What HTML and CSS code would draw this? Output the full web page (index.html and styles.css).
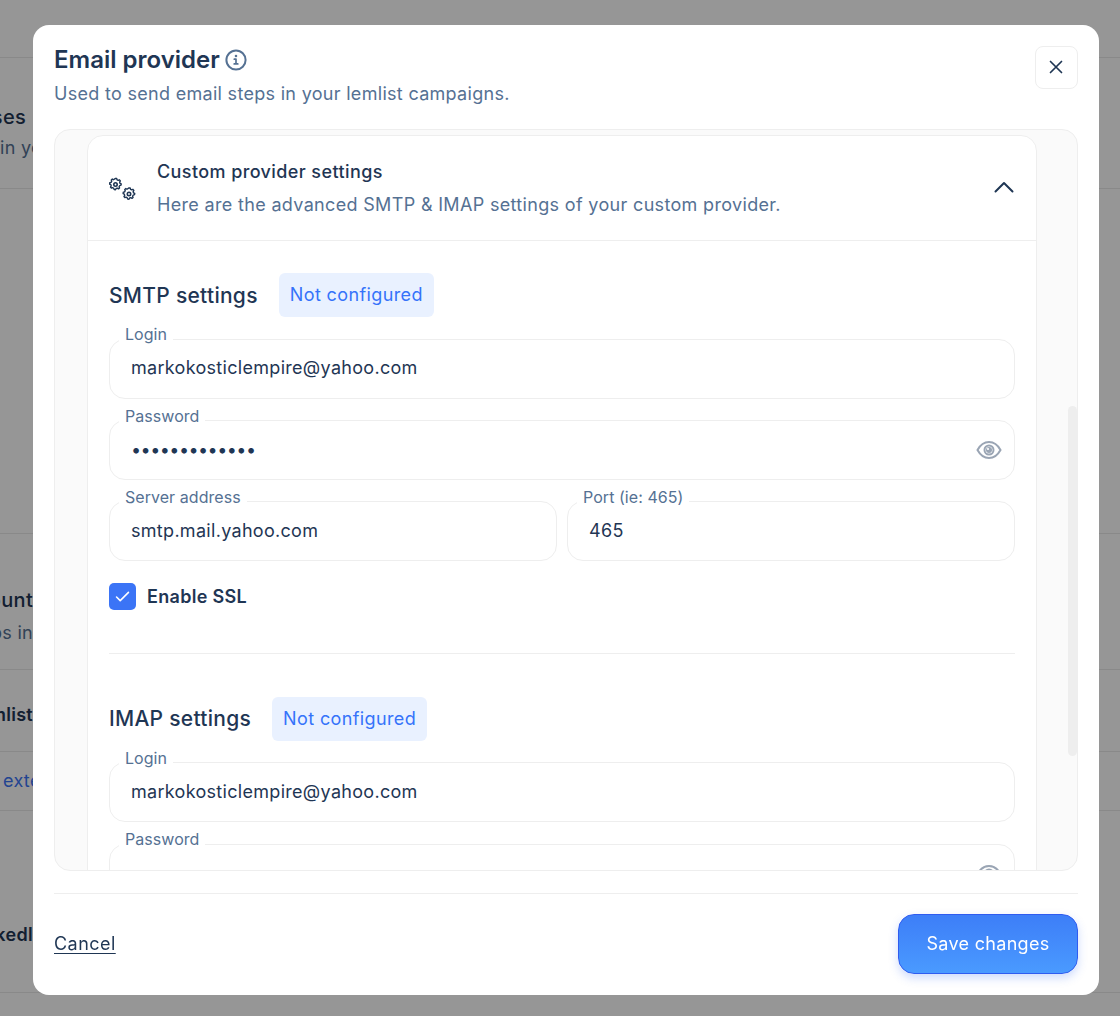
FILE: index.html
```html
<!DOCTYPE html>
<html lang="en">
<head>
<meta charset="utf-8">
<title>Email provider</title>
<link rel="stylesheet" href="styles.css">
</head>
<body>
<div class="page">
  <div class="bg-row bg-top"></div>
  <div class="bg-row bg-a"><div class="bg-title end-26">Email addresses</div><div class="bg-sub">in your</div></div>
  <div class="bg-row bg-b"></div>
  <div class="bg-row bg-c"><div class="bg-title end-33">Email account</div><div class="bg-sub bg-sub-low end-33">Steps in</div></div>
  <div class="bg-row bg-d"><div class="bg-strong end-33">lemlist</div></div>
  <div class="bg-row bg-e"><div class="bg-link">exte</div></div>
  <div class="bg-row bg-f"><div class="bg-strong end-33">Linkedl</div></div>
</div>
<div class="overlay">
  <div class="modal">
    <header class="modal-head">
      <div>
        <h1 class="modal-title">Email provider
          <svg class="info" viewBox="0 0 22 22" width="22" height="22" fill="none" stroke="#557193" stroke-width="2" stroke-linecap="round" stroke-linejoin="round"><circle cx="11" cy="11" r="9.600"/><path d="M9.300 10.200H11v4.600M9.200 14.900h3.600" stroke-width="1.700"/><circle cx="11" cy="7" r=".6" stroke-width="1.400"/></svg>
        </h1>
        <p class="modal-sub">Used to send email steps in your lemlist campaigns.</p>
      </div>
      <button class="close" type="button" aria-label="Close">
        <svg viewBox="0 0 14 14" width="14" height="14" fill="none" stroke="#1f3654" stroke-width="1.700" stroke-linecap="round"><path d="M1.500 1.500l11 11M12.500 1.500l-11 11"/></svg>
      </button>
    </header>
    <div class="panel">
      <div class="scrollbar"></div>
      <section class="card">
        <div class="card-head">
          <svg class="gears" viewBox="0 0 28 24" width="28" height="24" fill="none" stroke="#1f3654" stroke-width="1.600" stroke-linejoin="round">
            <path d="M7 1.500l1.300.2.500 1.500 1.300.6 1.400-.6 1 1.200-.8 1.300.4 1.400 1.400.7-.2 1.500-1.500.5-.7 1.300.5 1.400-1.200 1-1.300-.8-1.400.4-.7 1.400-1.500-.2-.5-1.500-1.300-.7-1.400.5-1-1.200.8-1.300-.4-1.400-1.400-.7.2-1.500 1.500-.5.700-1.300-.5-1.400 1.200-1 1.300.8z" transform="translate(.34 1.020) scale(.88)"/>
            <circle cx="6.500" cy="8.500" r="1.700"/>
            <path d="M19 9.500l1.300.2.500 1.500 1.300.6 1.400-.6 1 1.200-.8 1.300.4 1.400 1.400.7-.2 1.500-1.500.5-.7 1.300.5 1.400-1.200 1-1.300-.8-1.400.4-.7 1.400-1.500-.2-.5-1.500-1.300-.7-1.400.5-1-1.200.8-1.300-.4-1.400-1.400-.7.2-1.500 1.500-.5.700-1.300-.5-1.400 1.200-1 1.300.8z" transform="translate(3.280 3.480) scale(.88)"/>
            <circle cx="20" cy="18" r="1.700"/>
          </svg>
          <div class="card-text">
            <div class="card-title">Custom provider settings</div>
            <div class="card-desc">Here are the advanced SMTP &amp; IMAP settings of your custom provider.</div>
          </div>
          <svg class="chev" viewBox="0 0 20 12" width="20" height="12" fill="none" stroke="#1f3654" stroke-width="2" stroke-linecap="round" stroke-linejoin="round"><path d="M1.500 10.500L10 2l8.500 8.500"/></svg>
        </div>
        <div class="card-body">
          <div class="sec-head"><h2 class="sec-title sec-title-low">SMTP settings</h2><span class="badge">Not configured</span></div>
          <div class="field"><span class="label label-hi">Login</span><span class="value value-hi">markokosticlempire@yahoo.com</span></div>
          <div class="field"><span class="label">Password</span><span class="value dots">•••••••••••••</span>
            <svg class="eye" viewBox="0 0 26 22" width="26" height="22" fill="none" stroke="#9aa5b4" stroke-width="2"><path d="M1.500 11C4.500 5.500 8.500 3 13 3s8.500 2.500 11.500 8C21.500 16.500 17.500 19 13 19S4.500 16.500 1.500 11z"/><circle cx="13" cy="11" r="4.500"/><circle cx="13" cy="11" r="3" fill="#9aa5b4" stroke="none"/><circle cx="12" cy="10" r="1.100" fill="#fff" stroke="none"/></svg>
          </div>
          <div class="two">
            <div class="field"><span class="label">Server address</span><span class="value">smtp.mail.yahoo.com</span></div>
            <div class="field"><span class="label">Port (ie: 465)</span><span class="value">465</span></div>
          </div>
          <div class="check-row">
            <span class="check"><svg viewBox="0 0 16 12" width="15" height="11" fill="none" stroke="#fff" stroke-width="1.700" stroke-linecap="round" stroke-linejoin="round"><path d="M1.500 6.500l4 4 9-9"/></svg></span>
            <span class="check-label">Enable SSL</span>
          </div>
          <hr class="sep">
          <div class="sec-head imap"><h2 class="sec-title">IMAP settings</h2><span class="badge">Not configured</span></div>
          <div class="field field-imap"><span class="label">Login</span><span class="value">markokosticlempire@yahoo.com</span></div>
          <div class="field field-next"><span class="label label-hi">Password</span>
            <svg class="eye" viewBox="0 0 26 22" width="26" height="22" fill="none" stroke="#9aa5b4" stroke-width="2"><path d="M1.500 11C4.500 5.500 8.500 3 13 3s8.500 2.500 11.500 8C21.500 16.500 17.500 19 13 19S4.500 16.500 1.500 11z"/><circle cx="13" cy="11" r="4.500"/></svg>
          </div>
        </div>
      </section>
    </div>
    <footer class="modal-foot">
      <a class="cancel" href="#">Cancel</a>
      <button class="save" type="button">Save changes</button>
    </footer>
  </div>
</div>
</body>
</html>
```
FILE: styles.css
```css
* { box-sizing: border-box; }
html, body { margin: 0; height: 100%; }
body { background: #fff; font-family: Inter, "Noto Sans", sans-serif; color: #1f3654; overflow: hidden; letter-spacing: .3px; }

.page { width: 1120px; height: 1016px; }
.bg-row { border-bottom: 1px solid #e9e9e9; overflow: hidden; white-space: nowrap; }
.bg-top { height: 58px; }
.bg-a { height: 131px; padding-top: 45px; }
.bg-b { height: 345px; }
.bg-c { height: 136px; padding-top: 52px; }
.bg-d { height: 82px; padding-top: 33px; }
.bg-e { height: 59px; padding-top: 17px; }
.bg-f { height: 182px; padding-top: 112px; }
.bg-title { font-size: 20px; line-height: 28px; font-weight: 500; }
.bg-sub { font-size: 18px; line-height: 28px; margin-top: 3px; color: #557193; }
.bg-sub-low { margin-top: 5px; }
.bg-strong { font-size: 18px; line-height: 24px; font-weight: 600; }
.bg-link { font-size: 18px; line-height: 24px; color: #3b74f6; margin-left: 3px; }
.end-26 { width: 26px; display: flex; justify-content: flex-end; }
.end-33 { width: 33px; display: flex; justify-content: flex-end; }

.overlay { position: fixed; inset: 0; background: rgba(0, 0, 0, .41); padding: 25px 21px 21px 33px; }
.modal { width: 1066px; height: 970px; background: #fff; border-radius: 16px; padding: 21px; display: flex; flex-direction: column; }

.modal-head { display: flex; justify-content: space-between; align-items: flex-start; height: 83px; flex: none; }
.modal-title { margin: 0; font-size: 24px; line-height: 28px; font-weight: 600; letter-spacing: 0; color: #1f3654; display: flex; align-items: center; gap: 5px; }
.modal-sub { margin: 9px 0 0; font-size: 18px; line-height: 22px; color: #557193; }
.close { width: 43px; height: 43px; padding: 0 2px 2px 0; border: 1px solid #eee; border-radius: 8px; background: #fff; display: flex; align-items: center; justify-content: center; }

.panel { position: relative; height: 742px; flex: none; background: #fafafa; border: 1px solid #eee; border-radius: 16px; overflow: hidden; padding: 5px 40px 0 32px; }
.scrollbar { position: absolute; right: 0; top: 276px; width: 9px; height: 350px; border-radius: 5px; background: #eee; }

.card { background: #fff; border: 1px solid #eee; border-radius: 16px 16px 0 0; height: 900px; }
.card-head { display: flex; align-items: center; height: 105px; padding: 0 22px 0 21px; border-bottom: 1px solid #eee; }
.gears { flex: none; margin-right: 20px; }
.card-text { flex: 1; }
.card-title { font-size: 18px; line-height: 24px; font-weight: 500; letter-spacing: .4px; color: #1f3654; }
.card-desc { font-size: 18px; line-height: 24px; margin-top: 9px; letter-spacing: .33px; color: #557193; }
.chev { flex: none; margin-bottom: 2px; }

.card-body { padding: 32px 21px 0; }
.sec-head { display: flex; align-items: center; gap: 21px; height: 44px; }
.sec-title { margin: 0; font-size: 21px; line-height: 28px; font-weight: 450; letter-spacing: .28px; color: #1f3654; }
.sec-title-low { padding-top: 2px; }
.badge { height: 44px; padding: 0 11px 2px; border-radius: 6px; background: #e9f1ff; color: #3573fa; font-size: 18px; font-weight: 400; letter-spacing: .38px; display: flex; align-items: center; }
.imap { margin-top: 43px; }

.field { position: relative; height: 60px; margin-top: 22px; border: 1px solid #eee; border-radius: 16px; background: #fff; display: flex; align-items: center; padding: 0 21px; }
.field + .field { margin-top: 21px; }
.field.field-imap { margin-top: 21px; }
.field.field-next { margin-top: 22px; }
.label { position: absolute; left: 9px; top: -15px; padding: 0 6px; background: #fff; font-size: 16px; line-height: 20px; letter-spacing: .05px; color: #557193; }
.label-hi { top: -16px; }
.value { font-size: 18px; line-height: 24px; color: #1f3654; }
.value-hi { margin-bottom: 2px; }
.dots { letter-spacing: -.55px; }
.eye { position: absolute; right: 12px; top: 18px; }

.two { display: grid; grid-template-columns: 1fr 1fr; gap: 10px; margin-top: 21px; }
.two .field { margin-top: 0; }

.check-row { display: flex; align-items: center; gap: 11px; margin-top: 22px; }
.check { width: 27px; height: 27px; border-radius: 5px; background: #3b74f6; display: flex; align-items: center; justify-content: center; }
.check-label { font-size: 18px; font-weight: 600; color: #1f3654; }
.sep { border: 0; border-top: 1px solid #eee; margin: 43px 0 0; }

.modal-foot { flex: 1; margin-top: 22px; border-top: 1px solid #eee; display: flex; justify-content: space-between; align-items: center; padding-top: 20px; }
.cancel { font-size: 18px; line-height: 22px; letter-spacing: .45px; color: #1f3654; text-decoration: underline; text-underline-offset: 3px; }
.save { width: 180px; height: 60px; border: 1px solid #2f5cf0; border-radius: 16px; background: linear-gradient(180deg, #3d7ef8, #4a9aff); color: #fff; font: 400 18px Inter, sans-serif; letter-spacing: .3px; padding-bottom: 2px; box-shadow: 0 4px 10px rgba(60, 110, 245, .25); }
```
